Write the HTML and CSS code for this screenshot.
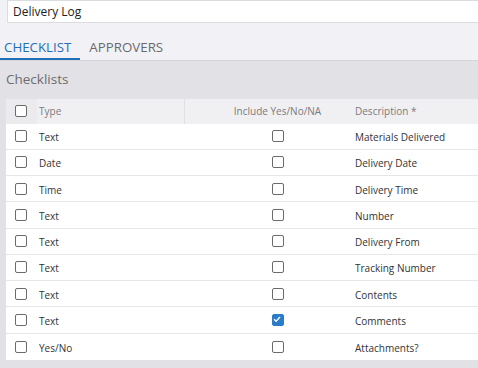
FILE: index.html
```html
<!DOCTYPE html>
<html>
<head>
<meta charset="utf-8">
<link rel="stylesheet" href="styles.css">
</head>
<body>
<div class="header">
  <div class="input-wrap"><div class="input">Delivery Log</div></div>
  <div class="tabs">
    <div class="tab active">CHECKLIST</div>
    <div class="tab">APPROVERS</div>
  </div>
</div>
<div class="section">
  <div class="section-title">Checklists</div>
  <div class="table">
    <div class="row head">
      <div class="c-sel"><span class="cb"></span></div>
      <div class="c-type">Type</div>
      <div class="c-inc">Include Yes/No/NA</div>
      <div class="c-desc">Description *</div>
    </div>
    <div class="row"><div class="c-sel"><span class="cb"></span></div><div class="c-type">Text</div><div class="c-inc"><span class="cb"></span></div><div class="c-desc">Materials Delivered</div></div>
    <div class="row"><div class="c-sel"><span class="cb"></span></div><div class="c-type">Date</div><div class="c-inc"><span class="cb"></span></div><div class="c-desc">Delivery Date</div></div>
    <div class="row"><div class="c-sel"><span class="cb"></span></div><div class="c-type">Time</div><div class="c-inc"><span class="cb"></span></div><div class="c-desc">Delivery Time</div></div>
    <div class="row"><div class="c-sel"><span class="cb"></span></div><div class="c-type">Text</div><div class="c-inc"><span class="cb"></span></div><div class="c-desc">Number</div></div>
    <div class="row"><div class="c-sel"><span class="cb"></span></div><div class="c-type">Text</div><div class="c-inc"><span class="cb"></span></div><div class="c-desc">Delivery From</div></div>
    <div class="row"><div class="c-sel"><span class="cb"></span></div><div class="c-type">Text</div><div class="c-inc"><span class="cb"></span></div><div class="c-desc">Tracking Number</div></div>
    <div class="row"><div class="c-sel"><span class="cb"></span></div><div class="c-type">Text</div><div class="c-inc"><span class="cb"></span></div><div class="c-desc">Contents</div></div>
    <div class="row"><div class="c-sel"><span class="cb"></span></div><div class="c-type">Text</div><div class="c-inc"><span class="cb checked"><svg viewBox="0 0 12 12" width="12" height="12"><path d="M3 6.2 L5.1 8.2 L9 4" fill="none" stroke="#fff" stroke-width="1.4"/></svg></span></div><div class="c-desc">Comments</div></div>
    <div class="row"><div class="c-sel"><span class="cb"></span></div><div class="c-type">Yes/No</div><div class="c-inc"><span class="cb"></span></div><div class="c-desc">Attachments?</div></div>
  </div>
</div>
</body>
</html>
```

FILE: styles.css
```css
html, body {
  margin: 0;
  padding: 0;
}
body {
  background: #e2e1e6;
  font-family: "Open Sans", "Liberation Sans", sans-serif;
  color: #333;
  height: 368px;
  overflow: hidden;
}
.header {
  background: #f2f1f6;
  border-bottom: 1px solid #d6d5da;
}
.input-wrap {
  padding: 0 0 0 7px;
}
.input {
  height: 23px;
  box-sizing: border-box;
  background: #fff;
  border: 1px solid #dcdce0;
  border-right: none;
  font-size: 12px;
  line-height: 21px;
  padding-left: 5px;
  color: #222;
}
.tabs {
  display: flex;
}
.tab {
  font-size: 13.3px;
  line-height: 19px;
  padding: 15px 9px 1px 9px;
  border-bottom: 2px solid transparent;
  color: #6a6a6a;
}
.tab.active {
  color: #1f70b8;
  border-bottom-color: #1f70b8;
  padding-left: 4px;
}
.section {
  padding-top: 8px;
}
.section-title {
  font-size: 13.5px;
  line-height: 20px;
  color: #6d6d70;
  padding-left: 6px;
}
.table {
  margin: 10px 0 0 6px;
  font-size: 10px;
}
.row {
  display: grid;
  grid-template-columns: 31px 148px 160px 1fr;
  height: 26.25px;
  box-sizing: border-box;
  background: #fff;
  border-bottom: 1px solid #e6e6ea;
  align-items: center;
}
.row > div {
  height: 100%;
  box-sizing: border-box;
  display: flex;
  align-items: center;
}
.row > .c-type,
.row > .c-desc {
  padding-top: 2px;
}
.row:last-child {
  border-bottom: none;
}
.row.head {
  height: 24.5px;
  background: #f0f0f2;
  border-bottom: none;
  color: #7a7a7e;
}
.row.head > .c-type,
.row.head > .c-desc {
  padding-top: 0;
}
.row.head .c-sel {
  background: #ebebee;
}
.row.head .c-type {
  border-right: 1px solid #e0e0e4;
}
.c-sel {
  padding-left: 9px;
}
.c-type {
  padding-left: 2px;
}
.c-inc {
  justify-content: center;
  padding-left: 25px;
}
.c-desc {
  padding-left: 10px;
}
.cb {
  display: inline-block;
  width: 12px;
  height: 12px;
  box-sizing: border-box;
  border: 1.5px solid #6b6b6b;
  border-radius: 2px;
  background: #fff;
  position: relative;
}
.cb.checked {
  background: #2a7bc8;
  border-color: #2a7bc8;
}
.cb.checked svg {
  position: absolute;
  left: -1.5px;
  top: -1.5px;
}
```
